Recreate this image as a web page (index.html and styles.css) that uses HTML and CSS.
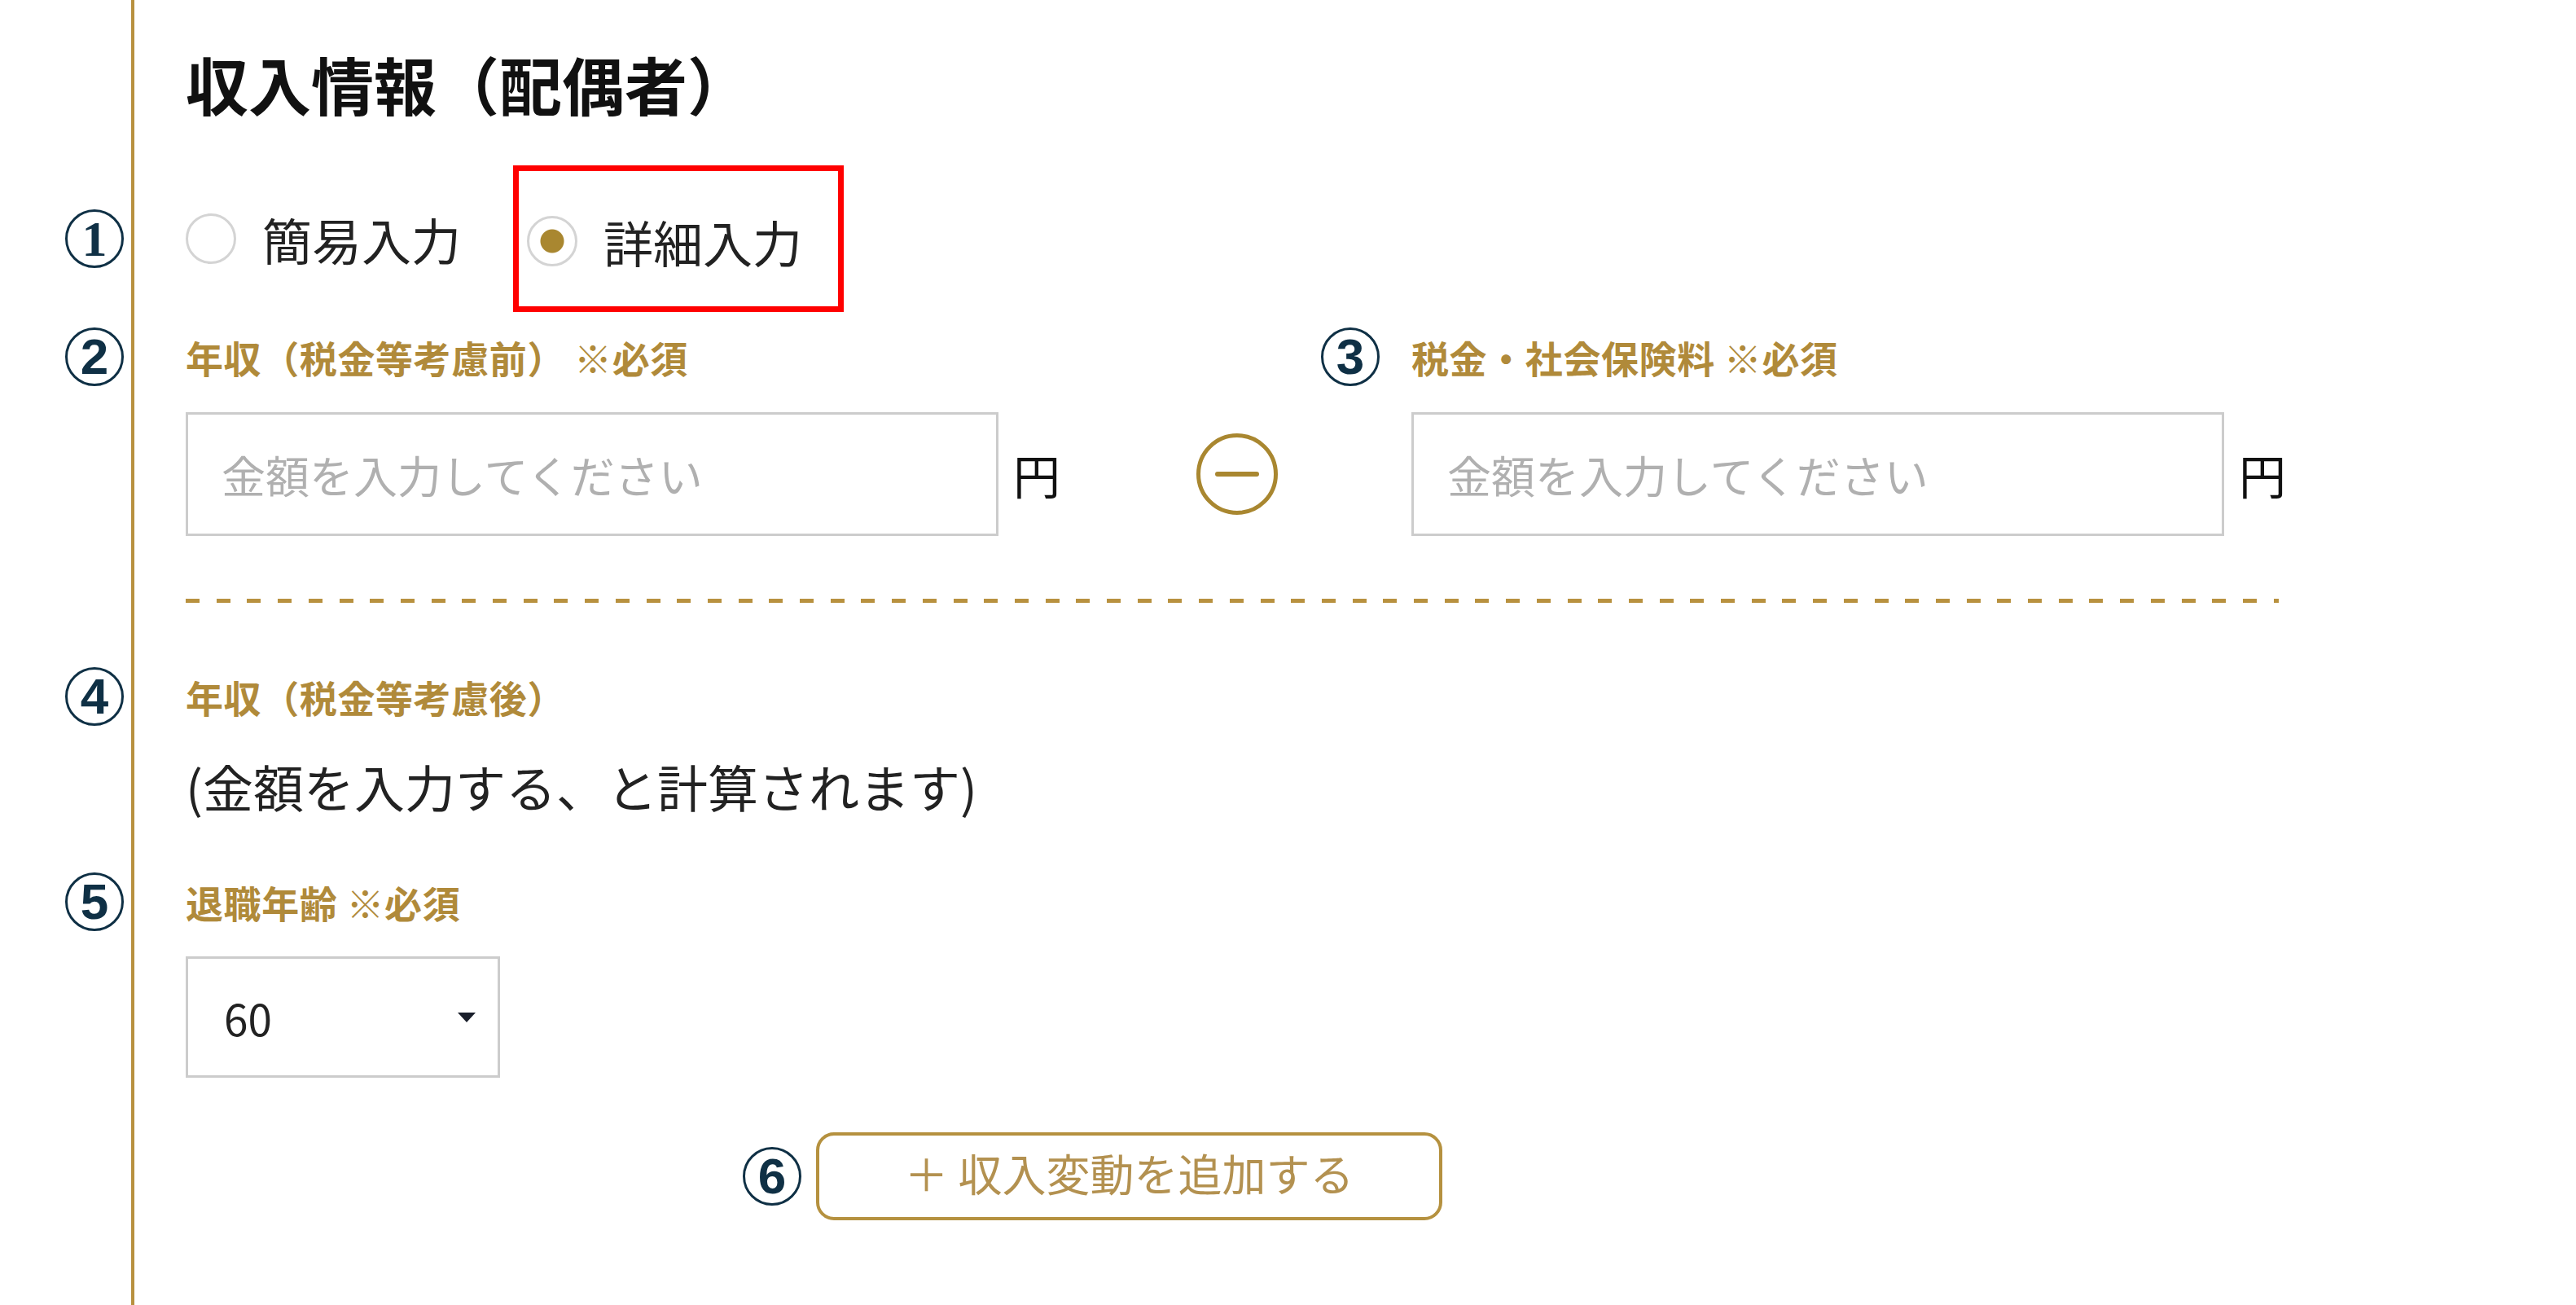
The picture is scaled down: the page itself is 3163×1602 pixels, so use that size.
FILE: index.html
```html
<!DOCTYPE html>
<html lang="ja">
<head>
    <meta charset="UTF-8">
    <meta name="viewport" content="width=device-width, initial-scale=1.0">
    <title>収入情報（配偶者）</title>
    <link rel="stylesheet" href="styles.css">
</head>
<body>
    <div class="form">
        <h2 class="title">収入情報（配偶者）</h2>

        <div class="mode-row">
            <span class="mark mark-serif">1</span>
            <label class="radio">
                <input type="radio" name="mode" value="simple">
                <span>簡易入力</span>
            </label>
            <label class="radio radio-marked">
                <input type="radio" name="mode" value="detail" checked>
                <span>詳細入力</span>
            </label>
        </div>

        <div class="amount-row">
            <div class="field">
                <div class="field-label"><span class="mark">2</span>年収（税金等考慮前） ※必須</div>
                <div class="input-line">
                    <input class="amount" type="text" placeholder="金額を入力してください">
                    <span class="unit">円</span>
                </div>
            </div>
            <div class="minus">
                <svg width="102" height="102" viewBox="0 0 102 102">
                    <circle cx="51" cy="51" r="47.5" fill="none" stroke="#a98730" stroke-width="5"/>
                    <line x1="27" y1="51" x2="75" y2="51" stroke="#a98730" stroke-width="6" stroke-linecap="round"/>
                </svg>
            </div>
            <div class="field">
                <div class="field-label"><span class="mark mark-near">3</span>税金・社会保険料 ※必須</div>
                <div class="input-line">
                    <input class="amount" type="text" placeholder="金額を入力してください">
                    <span class="unit">円</span>
                </div>
            </div>
        </div>

        <div class="dash"></div>

        <div class="field-label after-dash"><span class="mark">4</span>年収（税金等考慮後）</div>
        <div class="result">(金額を入力する、と計算されます)</div>

        <div class="field-label retire"><span class="mark">5</span>退職年齢 ※必須</div>
        <div class="select">
            <span>60</span>
            <span class="caret"></span>
        </div>

        <div class="add-row">
            <span class="mark mark-close">6</span>
            <button class="add-btn">＋ 収入変動を追加する</button>
        </div>
    </div>
</body>
</html>
```

FILE: styles.css
```css
body {
    margin: 0;
    font-family: "Noto Sans CJK JP", "Noto Sans", sans-serif;
    color: #222;
    background: #fff;
}

.form {
    min-height: 100vh;
    box-sizing: border-box;
    margin-left: 161px;
    padding: 65px 0 0 63px;
    border-left: 4px solid #b8913f;
}

.title {
    margin: 0;
    font-size: 77px;
    line-height: 76px;
    font-weight: 700;
    color: #111;
}

/* numbered markers in the margin */
.mark {
    position: absolute;
    top: 50%;
    right: calc(100% + 76px);
    transform: translateY(-50%);
    width: 72px;
    height: 72px;
    box-sizing: border-box;
    border: 3px solid #0f3045;
    border-radius: 50%;
    display: flex;
    align-items: center;
    justify-content: center;
    font: 700 62px/1 "Liberation Sans", Arial, sans-serif;
    letter-spacing: 0;
    color: #0f3045;
}

.mark-serif {
    font-family: "Liberation Serif", serif;
}

.mark-near {
    right: calc(100% + 39px);
}

.mark-close {
    right: calc(100% + 18px);
}

.mode-row {
    position: relative;
    display: flex;
    align-items: center;
    margin-top: 62px;
}

.radio {
    display: flex;
    align-items: center;
    gap: 32px;
    font-size: 61px;
    line-height: 1;
    color: #222;
}

.radio + .radio {
    margin-left: 64px;
}

.radio input {
    appearance: none;
    margin: 0;
    width: 62px;
    height: 62px;
    box-sizing: border-box;
    border: 3px solid #d4d4d4;
    border-radius: 50%;
    background: #fff;
}

.radio input:checked {
    background: radial-gradient(circle, #a98730 0 14px, #fff 15px);
}

.radio-marked {
    border: 7px solid #f00;
    padding: 55px 44px 49px 10px;
}

.amount-row {
    display: flex;
    align-items: flex-end;
    margin-top: 25px;
}

.field-label {
    position: relative;
    font-size: 46px;
    line-height: 60px;
    font-weight: 700;
    letter-spacing: 0.6px;
    color: #b08a3a;
}

.input-line {
    display: flex;
    align-items: center;
    margin-top: 38px;
}

.amount {
    width: 998px;
    height: 152px;
    box-sizing: border-box;
    border: 3px solid #ccc;
    padding: 0 0 0 41px;
    font-family: inherit;
    font-size: 54px;
    color: #222;
}

.amount::placeholder {
    color: #b0b0b0;
}

.unit {
    margin-left: 18px;
    font-size: 58px;
    color: #111;
}

.minus {
    flex: none;
    width: 102px;
    height: 102px;
    margin: 0 163px 25px 166px;
}

.dash {
    width: 2570px;
    height: 5px;
    margin-top: 77px;
    background: repeating-linear-gradient(to right, #b8913f 0 17px, transparent 17px 37.7px);
}

.after-dash {
    margin-top: 85px;
}

.result {
    margin-top: 40px;
    font-size: 62px;
    line-height: 80px;
    color: #222;
}

.retire {
    margin-top: 72px;
}

.select {
    display: flex;
    align-items: center;
    width: 386px;
    height: 149px;
    box-sizing: border-box;
    margin-top: 37px;
    padding: 0 27px 0 44px;
    border: 3px solid #ccc;
    font-size: 53px;
    color: #222;
}

.caret {
    margin-left: auto;
    border-left: 11.5px solid transparent;
    border-right: 11.5px solid transparent;
    border-top: 12px solid #1a1f2b;
}

.add-row {
    position: relative;
    display: flex;
    margin: 67px 0 0 774px;
}

.add-btn {
    width: 769px;
    height: 108px;
    padding: 0 0 10px;
    border: 4px solid #b5913f;
    border-radius: 22px;
    background: #fff;
    font-family: inherit;
    font-size: 54px;
    color: #b39150;
}
```
